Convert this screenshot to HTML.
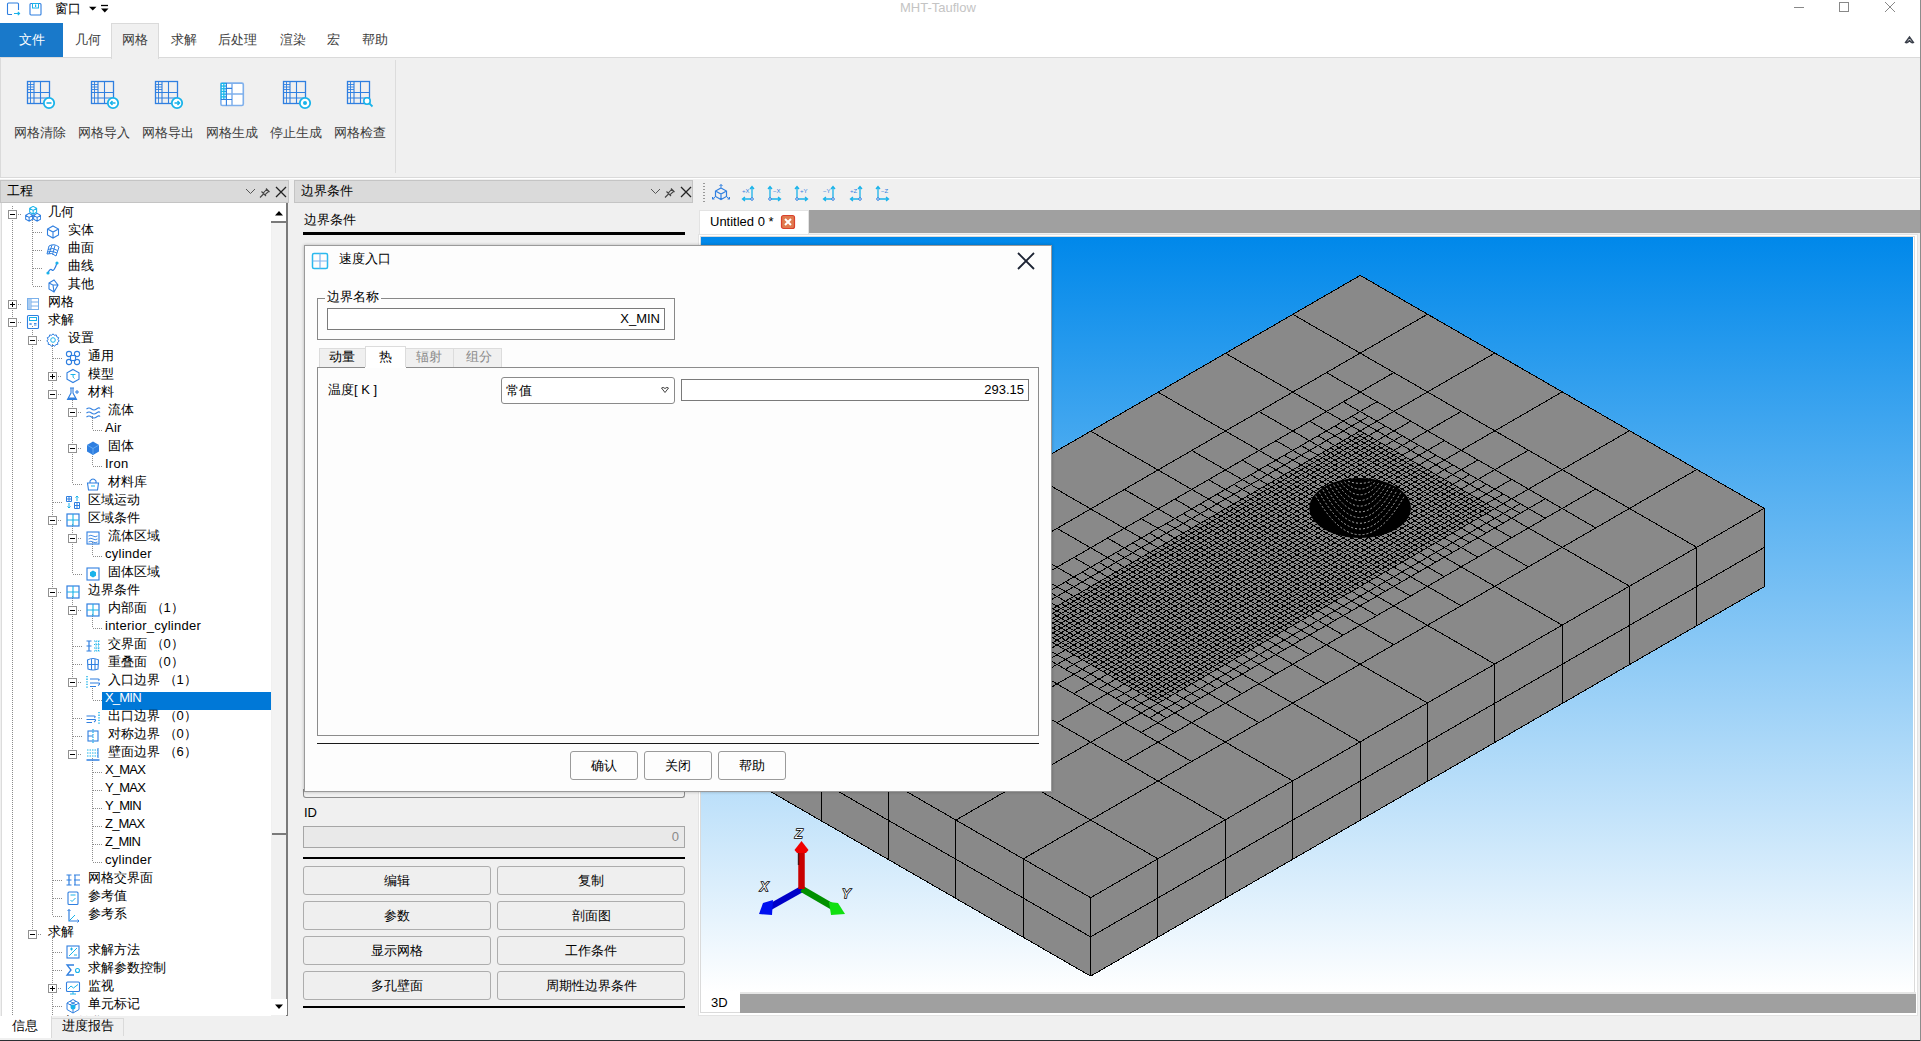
<!DOCTYPE html><html><head><meta charset="utf-8"><style>
*{box-sizing:border-box;margin:0;padding:0}
html,body{width:1921px;height:1041px;overflow:hidden;background:#f0f0f0;font-family:"Liberation Sans",sans-serif;font-size:13px;color:#000}
.a{position:absolute}
.tt{position:absolute;height:18px;line-height:18px;white-space:nowrap;font-size:13px}
.ico{position:absolute;width:16px;height:16px}
.ico svg{display:block}
.exp{position:absolute;width:9px;height:9px;border:1px solid #919191;background:#fff}
.exp i{position:absolute;left:1px;top:3px;width:5px;height:1px;background:#000}
.exp b{position:absolute;left:3px;top:1px;width:1px;height:5px;background:#000}
.btn{position:absolute;border:1px solid #adadad;border-radius:3px;background:#efefef;text-align:center;font-size:13px;color:#000}
.rt{position:absolute;top:23px;height:34px;line-height:34px;font-size:13px;color:#3c3c3c;white-space:nowrap}
.rb{position:absolute;top:124px;height:18px;line-height:18px;font-size:13px;color:#3c3c3c;white-space:nowrap}
</style></head><body>
<div class="a" style="left:0;top:0;width:1921px;height:57px;background:#fff"></div>
<svg class="a" style="left:0;top:0" width="24" height="18" viewBox="0 0 24 18"><path d="M12 14.5H8.5Q7.5 14.5 7.5 13.5V4Q7.5 3 8.5 3H17.5Q18.5 3 18.5 4V10" fill="none" stroke="#2f7fe0" stroke-width="1.1"/><path d="M14 13.5H19.5 M17.8 11.8L19.5 13.5L17.8 15.2" fill="none" stroke="#19b3ea" stroke-width="1.2"/></svg>
<svg class="a" style="left:29px;top:2px" width="14" height="14" viewBox="0 0 14 14"><rect x="1" y="1.5" width="11" height="11.5" rx="1" fill="none" stroke="#2f7fe0" stroke-width="1.1"/><rect x="3.5" y="1.5" width="6" height="4.5" fill="none" stroke="#19b3ea" stroke-width="1"/><rect x="6" y="2.5" width="1.2" height="2.5" fill="#19b3ea"/></svg>
<div class="a" style="left:55px;top:1px;height:16px;line-height:16px;font-size:13px;color:#000">窗口</div>
<svg class="a" style="left:0;top:0" width="120" height="18" viewBox="0 0 120 18"><path d="M89 6.8H96.5L92.75 10.5Z" fill="#000"/><path d="M101 5.5H108" stroke="#000" stroke-width="1.3"/><path d="M101 8.5H108.5L104.75 12.5Z" fill="#000"/></svg>
<div class="a" style="left:900px;top:0px;height:16px;line-height:16px;font-size:13px;color:#c4c4c4">MHT-Tauflow</div>
<div class="a" style="left:1794px;top:7px;width:10px;height:1px;background:#888"></div>
<div class="a" style="left:1839px;top:2px;width:10px;height:10px;border:1px solid #888"></div>
<svg class="a" style="left:1884px;top:1px" width="12" height="12" viewBox="0 0 12 12"><path d="M1 1L11 11M11 1L1 11" stroke="#888" stroke-width="1"/></svg>
<svg class="a" style="left:1904px;top:35px" width="11" height="9" viewBox="0 0 11 9"><path d="M1.5 7.5L5.5 2L9.5 7.5Q8 8.5 5.5 5.5Q3 8.5 1.5 7.5Z" fill="none" stroke="#3a3f4a" stroke-width="1.4"/></svg>
<div class="a" style="left:0;top:23px;width:63px;height:34px;background:#1979ca;color:#fff;text-align:center;line-height:34px;font-size:13px">文件</div>
<div class="a" style="left:111px;top:23px;width:48px;height:35px;background:#f0f0f0;border:1px solid #dadada;border-bottom:none"></div>
<div class="rt" style="left:75px">几何</div>
<div class="rt" style="left:122px">网格</div>
<div class="rt" style="left:171px">求解</div>
<div class="rt" style="left:218px">后处理</div>
<div class="rt" style="left:280px">渲染</div>
<div class="rt" style="left:327px">宏</div>
<div class="rt" style="left:362px">帮助</div>
<div class="a" style="left:0;top:57px;width:1921px;height:121px;background:#f0f0f0;border-top:1px solid #dadada;border-bottom:1px solid #dadada;border-left:1px solid #dadada"></div>
<div class="a" style="left:111px;top:57px;width:48px;height:2px;background:#f0f0f0;border-left:1px solid #dadada;border-right:1px solid #dadada"></div>
<div class="a" style="left:395px;top:60px;width:1px;height:113px;background:#dcdcdc"></div>
<div class="a" style="left:0;top:178px;width:1921px;height:1px;background:#fff"></div>
<div class="a" style="left:26px;top:80px"><svg width="30" height="30" viewBox="0 0 30 30"><rect x="1.5" y="1.5" width="22" height="22" fill="none" stroke="#2f7fe0" stroke-width="1.3"/><path d="M1.5 12.5H24 M1.5 18H24 M8 1.5V24 M14.5 1.5V24" stroke="#2f7fe0" stroke-width="1.1"/><path d="M4.5 1.5V24 M1.5 4.5H8 M1.5 7H8 M1.5 9.5H8" stroke="#2f7fe0" stroke-width="0.9"/><circle cx="23" cy="23" r="5.2" fill="#fff" stroke="#19b3ea" stroke-width="1.8"/><path d="M20.5 23H25.5" stroke="#19b3ea" stroke-width="1.6"/></svg></div>
<div class="rb" style="left:14px">网格清除</div>
<div class="a" style="left:90px;top:80px"><svg width="30" height="30" viewBox="0 0 30 30"><rect x="1.5" y="1.5" width="22" height="22" fill="none" stroke="#2f7fe0" stroke-width="1.3"/><path d="M1.5 12.5H24 M1.5 18H24 M8 1.5V24 M14.5 1.5V24" stroke="#2f7fe0" stroke-width="1.1"/><path d="M4.5 1.5V24 M1.5 4.5H8 M1.5 7H8 M1.5 9.5H8" stroke="#2f7fe0" stroke-width="0.9"/><circle cx="23" cy="23" r="5.2" fill="#fff" stroke="#19b3ea" stroke-width="1.8"/><path d="M25.5 23H20.5M22.5 21L20.5 23L22.5 25" fill="none" stroke="#19b3ea" stroke-width="1.5"/></svg></div>
<div class="rb" style="left:78px">网格导入</div>
<div class="a" style="left:154px;top:80px"><svg width="30" height="30" viewBox="0 0 30 30"><rect x="1.5" y="1.5" width="22" height="22" fill="none" stroke="#2f7fe0" stroke-width="1.3"/><path d="M1.5 12.5H24 M1.5 18H24 M8 1.5V24 M14.5 1.5V24" stroke="#2f7fe0" stroke-width="1.1"/><path d="M4.5 1.5V24 M1.5 4.5H8 M1.5 7H8 M1.5 9.5H8" stroke="#2f7fe0" stroke-width="0.9"/><circle cx="23" cy="23" r="5.2" fill="#fff" stroke="#19b3ea" stroke-width="1.8"/><path d="M20.5 23H25.5M23.5 21L25.5 23L23.5 25" fill="none" stroke="#19b3ea" stroke-width="1.5"/></svg></div>
<div class="rb" style="left:142px">网格导出</div>
<div class="a" style="left:218px;top:80px"><svg width="30" height="30" viewBox="0 0 30 30"><g transform="translate(2.1,2.3)"><rect x="0.8" y="0.8" width="22.4" height="22.4" rx="1.5" fill="#fff" stroke="#7fb0ec" stroke-width="1.6"/><rect x="0.5" y="0.5" width="6" height="16.8" fill="#19b6ea"/><rect x="1.7" y="1.7" width="1.4" height="1.4" fill="#fff"/><rect x="4.4" y="1.7" width="1.4" height="1.4" fill="#fff"/><rect x="1.7" y="4.4" width="1.4" height="1.4" fill="#fff"/><rect x="4.4" y="4.4" width="1.4" height="1.4" fill="#fff"/><rect x="1.7" y="7.1" width="1.4" height="1.4" fill="#fff"/><rect x="4.4" y="7.1" width="1.4" height="1.4" fill="#fff"/><rect x="1.7" y="9.8" width="1.4" height="1.4" fill="#fff"/><rect x="4.4" y="9.8" width="1.4" height="1.4" fill="#fff"/><rect x="1.7" y="12.5" width="1.4" height="1.4" fill="#fff"/><rect x="4.4" y="12.5" width="1.4" height="1.4" fill="#fff"/><rect x="1.7" y="15.2" width="1.4" height="1.4" fill="#fff"/><rect x="4.4" y="15.2" width="1.4" height="1.4" fill="#fff"/><path d="M11.9 0.8V23.2 M6.3 11.8H23.2" stroke="#7fb0ec" stroke-width="1.5"/><path d="M6.3 0.8V23.2 M6.3 6.1H11.9 M6.3 17.2H11.9 M0.8 17.2H6.3" stroke="#2f7fe0" stroke-width="1.1"/></g></svg></div>
<div class="rb" style="left:206px">网格生成</div>
<div class="a" style="left:282px;top:80px"><svg width="30" height="30" viewBox="0 0 30 30"><rect x="1.5" y="1.5" width="22" height="22" fill="none" stroke="#2f7fe0" stroke-width="1.3"/><path d="M1.5 12.5H24 M1.5 18H24 M8 1.5V24 M14.5 1.5V24" stroke="#2f7fe0" stroke-width="1.1"/><path d="M4.5 1.5V24 M1.5 4.5H8 M1.5 7H8 M1.5 9.5H8" stroke="#2f7fe0" stroke-width="0.9"/><circle cx="23" cy="23" r="5.2" fill="#fff" stroke="#19b3ea" stroke-width="1.8"/><circle cx="23" cy="23" r="2" fill="#19b3ea"/></svg></div>
<div class="rb" style="left:270px">停止生成</div>
<div class="a" style="left:346px;top:80px"><svg width="30" height="30" viewBox="0 0 30 30"><rect x="1.5" y="1.5" width="22" height="22" fill="none" stroke="#2f7fe0" stroke-width="1.3"/><path d="M1.5 12.5H24 M1.5 18H24 M8 1.5V24 M14.5 1.5V24" stroke="#2f7fe0" stroke-width="1.1"/><path d="M4.5 1.5V24 M1.5 4.5H8 M1.5 7H8 M1.5 9.5H8" stroke="#2f7fe0" stroke-width="0.9"/><circle cx="21" cy="21" r="3.2" fill="#fff" stroke="#19b3ea" stroke-width="1.6"/><path d="M23.3 23.3L26.5 26.5" stroke="#19b3ea" stroke-width="1.8"/></svg></div>
<div class="rb" style="left:334px">网格检查</div>
<div class="a" style="left:0;top:180px;width:289px;height:23px;background:#dadada;border:1px solid #c4c4c4"></div>
<div class="a" style="left:7px;top:182px;height:18px;line-height:18px;font-size:13px">工程</div>
<svg class="a" style="left:245px;top:185px" width="44" height="14" viewBox="0 0 44 14"><path d="M1 4L5.5 8.5L10 4" fill="none" stroke="#555" stroke-width="1"/><path d="M15 12.5L18.5 9 M16.5 6.5L21 11 M18.2 8.2L21.5 4.5 M19.8 9.8L23.5 6.5 M21 3.5L24.5 7" fill="none" stroke="#444" stroke-width="1.1"/><path d="M31 2L41 12M41 2L31 12" stroke="#222" stroke-width="1.3"/></svg>
<div class="a" style="left:1px;top:203px;width:287px;height:813px;background:#fff;border-left:1px solid #dcdcdc"></div>
<div style="position:absolute;left:0;top:0;width:271px;height:1016px;overflow:hidden;clip-path:inset(203px 0 0 0)"><svg class="tl" width="270" height="812" viewBox="0 205 270 812" style="position:absolute;left:0;top:205px"><path d="M12.5 214.0V304.0M32.5 232.0V250.0M32.5 250.0V268.0M32.5 268.0V286.0M12.5 304.0V322.0M32.5 340.0V934.0M52.5 358.0V376.0M52.5 376.0V394.0M52.5 394.0V502.0M72.5 412.0V448.0M72.5 448.0V484.0M52.5 502.0V520.0M52.5 520.0V592.0M72.5 538.0V574.0M52.5 592.0V880.0M72.5 610.0V646.0M72.5 646.0V664.0M72.5 664.0V682.0M72.5 682.0V718.0M72.5 718.0V736.0M72.5 736.0V754.0M92.5 772.0V790.0M92.5 790.0V808.0M92.5 808.0V826.0M92.5 826.0V844.0M92.5 844.0V862.0M52.5 880.0V898.0M52.5 898.0V916.0M52.5 952.0V970.0M52.5 970.0V988.0M52.5 988.0V1006.0M52.5 1006.0V1024.0M12.5 322.0V1016M52.5 1006.0V1016M12.5 206V214M17.5 214.5H21.5M32.5 232.5H41.5M32.5 250.5H41.5M32.5 268.5H41.5M32.5 286.5H41.5M17.5 304.5H21.5M17.5 322.5H21.5M37.5 340.5H41.5M52.5 358.5H61.5M57.5 376.5H61.5M57.5 394.5H61.5M77.5 412.5H81.5M92.5 430.5H101.5M77.5 448.5H81.5M92.5 466.5H101.5M72.5 484.5H81.5M52.5 502.5H61.5M57.5 520.5H61.5M77.5 538.5H81.5M92.5 556.5H101.5M72.5 574.5H81.5M57.5 592.5H61.5M77.5 610.5H81.5M92.5 628.5H101.5M72.5 646.5H81.5M72.5 664.5H81.5M77.5 682.5H81.5M92.5 700.5H101.5M72.5 718.5H81.5M72.5 736.5H81.5M77.5 754.5H81.5M92.5 772.5H101.5M92.5 790.5H101.5M92.5 808.5H101.5M92.5 826.5H101.5M92.5 844.5H101.5M92.5 862.5H101.5M52.5 880.5H61.5M52.5 898.5H61.5M52.5 916.5H61.5M37.5 934.5H41.5M52.5 952.5H61.5M52.5 970.5H61.5M57.5 988.5H61.5M52.5 1006.5H61.5M52.5 1024.5H61.5" stroke="#8c8c8c" stroke-width="1" stroke-dasharray="1 1" fill="none" shape-rendering="crispEdges"/></svg>
<svg width="270" height="812" viewBox="0 205 270 812" style="position:absolute;left:0;top:205px"><path d="M32.5 218.0V232.0M32.5 326.0V340.0M52.5 344.0V358.0M72.5 398.0V412.0M92.5 416.0V430.0M92.5 452.0V466.0M72.5 524.0V538.0M92.5 542.0V556.0M72.5 596.0V610.0M92.5 614.0V628.0M92.5 686.0V700.0M92.5 758.0V772.0M52.5 938.0V952.0" stroke="#8c8c8c" stroke-width="1" stroke-dasharray="1 1" fill="none" shape-rendering="crispEdges"/></svg>
<div class="exp" style="left:8px;top:210px"><i></i></div>
<div class="ico" style="left:25px;top:206px"><svg width="16" height="16" viewBox="0 0 16 16"><g transform="translate(3.5,-0.5) scale(0.58)"><path d="M8 1.5L14 5V11.5L8 15L2 11.5V5Z M2 5L8 8.5L14 5 M8 8.5V15" fill="none" stroke="#19b3ea" stroke-width="1.8"/></g><g transform="translate(-0.5,6.5) scale(0.58)"><path d="M8 1.5L14 5V11.5L8 15L2 11.5V5Z M2 5L8 8.5L14 5 M8 8.5V15" fill="none" stroke="#2f7fe0" stroke-width="1.8"/></g><g transform="translate(7.5,6.5) scale(0.58)"><path d="M8 1.5L14 5V11.5L8 15L2 11.5V5Z M2 5L8 8.5L14 5 M8 8.5V15" fill="none" stroke="#2f7fe0" stroke-width="1.8"/></g></svg></div>
<div class="tt" style="left:48px;top:203px;color:#000">几何</div>
<div class="ico" style="left:45px;top:224px"><svg width="16" height="16" viewBox="0 0 16 16"><path d="M8 2L13.5 5V11L8 14L2.5 11V5Z M2.5 5L8 8L13.5 5 M8 8V14" fill="none" stroke="#2f7fe0" stroke-width="1.1"/></svg></div>
<div class="tt" style="left:68px;top:221px;color:#000">实体</div>
<div class="ico" style="left:45px;top:242px"><svg width="16" height="16" viewBox="0 0 16 16"><path d="M4 4Q9 1 14 5L11 14Q7 10 2 12Z M7 3L4 12 M10 3.5L7.5 12.5 M3 7.5Q8 5 12.5 8.5 M2.5 10Q7 8 12 11" fill="none" stroke="#2f7fe0" stroke-width="1"/></svg></div>
<div class="tt" style="left:68px;top:239px;color:#000">曲面</div>
<div class="ico" style="left:45px;top:260px"><svg width="16" height="16" viewBox="0 0 16 16"><path d="M3 13Q5 8 7 10T12 3" fill="none" stroke="#2f7fe0" stroke-width="1.2"/><circle cx="3" cy="13" r="1.6" fill="#19b3ea"/><circle cx="12" cy="3" r="1.6" fill="#19b3ea"/></svg></div>
<div class="tt" style="left:68px;top:257px;color:#000">曲线</div>
<div class="ico" style="left:45px;top:278px"><svg width="16" height="16" viewBox="0 0 16 16"><path d="M4 5L9 2L13 7L9 14L4 11Z M4 5L8 7L9 14 M8 7L13 7" fill="none" stroke="#2f7fe0" stroke-width="1.1"/></svg></div>
<div class="tt" style="left:68px;top:275px;color:#000">其他</div>
<div class="exp" style="left:8px;top:300px"><i></i><b></b></div>
<div class="ico" style="left:25px;top:296px"><svg width="16" height="16" viewBox="0 0 16 16"><rect x="2.5" y="2.5" width="11" height="11" fill="none" stroke="#7ab0ea" stroke-width="1"/><path d="M2.5 6H13.5 M2.5 10H13.5 M6 2.5V13.5" stroke="#7ab0ea" stroke-width="1"/><rect x="3" y="3" width="3" height="10" fill="#a9ccf2"/></svg></div>
<div class="tt" style="left:48px;top:293px;color:#000">网格</div>
<div class="exp" style="left:8px;top:318px"><i></i></div>
<div class="ico" style="left:25px;top:314px"><svg width="16" height="16" viewBox="0 0 16 16"><rect x="2.5" y="1.5" width="11" height="13" rx="1" fill="none" stroke="#2f7fe0" stroke-width="1.1"/><rect x="4.5" y="3.5" width="7" height="3" fill="none" stroke="#19b3ea" stroke-width="1"/><path d="M4.5 9L6.5 11M6.5 9L4.5 11 M9 9.5H11.5M9 11H11.5" stroke="#2f7fe0" stroke-width="0.9"/></svg></div>
<div class="tt" style="left:48px;top:311px;color:#000">求解</div>
<div class="exp" style="left:28px;top:336px"><i></i></div>
<div class="ico" style="left:45px;top:332px"><svg width="16" height="16" viewBox="0 0 16 16"><path d="M8 1.8L9.3 3.3L11.3 2.9L11.8 4.9L13.7 5.6L13 7.5L14.2 9.1L12.6 10.4L12.8 12.4L10.8 12.6L9.6 14.3L8 13.1L6.4 14.3L5.2 12.6L3.2 12.4L3.4 10.4L1.8 9.1L3 7.5L2.3 5.6L4.2 4.9L4.7 2.9L6.7 3.3Z" fill="none" stroke="#2f7fe0" stroke-width="1"/><circle cx="8" cy="8" r="2.3" fill="none" stroke="#19b3ea" stroke-width="1"/></svg></div>
<div class="tt" style="left:68px;top:329px;color:#000">设置</div>
<div class="ico" style="left:65px;top:350px"><svg width="16" height="16" viewBox="0 0 16 16"><rect x="5.5" y="5.5" width="5" height="5" fill="none" stroke="#2f7fe0" stroke-width="1.1"/><circle cx="4" cy="4" r="2.6" fill="none" stroke="#2f7fe0" stroke-width="1.1"/><circle cx="12" cy="4" r="2.6" fill="none" stroke="#2f7fe0" stroke-width="1.1"/><circle cx="4" cy="12" r="2.6" fill="none" stroke="#2f7fe0" stroke-width="1.1"/><circle cx="12" cy="12" r="2.6" fill="none" stroke="#2f7fe0" stroke-width="1.1"/></svg></div>
<div class="tt" style="left:88px;top:347px;color:#000">通用</div>
<div class="exp" style="left:48px;top:372px"><i></i><b></b></div>
<div class="ico" style="left:65px;top:368px"><svg width="16" height="16" viewBox="0 0 16 16"><path d="M8 1.5L14 4.8V11.2L8 14.5L2 11.2V4.8Z" fill="none" stroke="#2f7fe0" stroke-width="1.1"/><path d="M5.5 6.5H10.5 M8 6.5Q7.5 10 9.5 10.5" fill="none" stroke="#19b3ea" stroke-width="1"/></svg></div>
<div class="tt" style="left:88px;top:365px;color:#000">模型</div>
<div class="exp" style="left:48px;top:390px"><i></i></div>
<div class="ico" style="left:65px;top:386px"><svg width="16" height="16" viewBox="0 0 16 16"><path d="M5 2H9 M6 2V7L2.5 13.5H11.5L8 7V2" fill="none" stroke="#2f7fe0" stroke-width="1.1"/><path d="M3.5 11.5H10.5L11.5 13.5H2.5Z" fill="#2f7fe0"/><path d="M12 4V8M10 6H14" stroke="#2f7fe0" stroke-width="1"/></svg></div>
<div class="tt" style="left:88px;top:383px;color:#000">材料</div>
<div class="exp" style="left:68px;top:408px"><i></i></div>
<div class="ico" style="left:85px;top:404px"><svg width="16" height="16" viewBox="0 0 16 16"><path d="M1.5 5Q4 3 6.5 5T11.5 5T15 4.5 M1.5 9Q4 7 6.5 9T11.5 9T15 8.5 M1.5 13Q4 11 6.5 13T11.5 13T15 12.5" fill="none" stroke="#2f7fe0" stroke-width="1.1"/></svg></div>
<div class="tt" style="left:108px;top:401px;color:#000">流体</div>
<div class="tt" style="left:105px;top:419px;color:#000;letter-spacing:0.25px">Air</div>
<div class="exp" style="left:68px;top:444px"><i></i></div>
<div class="ico" style="left:85px;top:440px"><svg width="16" height="16" viewBox="0 0 16 16"><path d="M8 1.5L14 5V11.5L8 15L2 11.5V5Z" fill="#2f7fe0"/><path d="M2 5L8 8.5L14 5 M8 8.5V15" stroke="#6fb2f5" stroke-width="0.8" fill="none"/></svg></div>
<div class="tt" style="left:108px;top:437px;color:#000">固体</div>
<div class="tt" style="left:105px;top:455px;color:#000;letter-spacing:0.25px">Iron</div>
<div class="ico" style="left:85px;top:476px"><svg width="16" height="16" viewBox="0 0 16 16"><path d="M2.5 7H13.5L12.5 14H3.5Z M5 7V5Q8 1 11 5V7" fill="none" stroke="#2f7fe0" stroke-width="1.1"/><path d="M6 10H10" stroke="#19b3ea" stroke-width="1"/></svg></div>
<div class="tt" style="left:108px;top:473px;color:#000">材料库</div>
<div class="ico" style="left:65px;top:494px"><svg width="16" height="16" viewBox="0 0 16 16"><path d="M1.5 2.5H6.5V7.5H1.5Z M9.5 8.5H14.5V14.5H9.5Z M1.5 5H6.5 M4 2.5V7.5 M9.5 11.5H14.5 M12 8.5V14.5" fill="none" stroke="#2f7fe0" stroke-width="1"/><path d="M4 9V14 M2.5 12.5L4 14L5.5 12.5 M12 2V7 M10.5 3.5L12 2L13.5 3.5" fill="none" stroke="#19b3ea" stroke-width="1"/></svg></div>
<div class="tt" style="left:88px;top:491px;color:#000">区域运动</div>
<div class="exp" style="left:48px;top:516px"><i></i></div>
<div class="ico" style="left:65px;top:512px"><svg width="16" height="16" viewBox="0 0 16 16"><rect x="2" y="2" width="12" height="12" fill="none" stroke="#2f7fe0" stroke-width="1.2"/><path d="M8 2V14M2 8H14" stroke="#19b3ea" stroke-width="1.1"/></svg></div>
<div class="tt" style="left:88px;top:509px;color:#000">区域条件</div>
<div class="exp" style="left:68px;top:534px"><i></i></div>
<div class="ico" style="left:85px;top:530px"><svg width="16" height="16" viewBox="0 0 16 16"><rect x="2" y="2" width="12" height="12" fill="none" stroke="#2f7fe0" stroke-width="1.1"/><path d="M3.5 6Q6 4.5 8 6T12.5 6 M3.5 9Q6 7.5 8 9T12.5 9 M3.5 12Q6 10.5 8 12T12.5 12" fill="none" stroke="#2f7fe0" stroke-width="0.9"/></svg></div>
<div class="tt" style="left:108px;top:527px;color:#000">流体区域</div>
<div class="tt" style="left:105px;top:545px;color:#000;letter-spacing:0.25px">cylinder</div>
<div class="ico" style="left:85px;top:566px"><svg width="16" height="16" viewBox="0 0 16 16"><rect x="2" y="2" width="12" height="12" fill="none" stroke="#2f7fe0" stroke-width="1.1"/><path d="M8 4.5L11 6.2V9.8L8 11.5L5 9.8V6.2Z" fill="#19b3ea"/></svg></div>
<div class="tt" style="left:108px;top:563px;color:#000">固体区域</div>
<div class="exp" style="left:48px;top:588px"><i></i></div>
<div class="ico" style="left:65px;top:584px"><svg width="16" height="16" viewBox="0 0 16 16"><rect x="2" y="2" width="12" height="12" fill="none" stroke="#2f7fe0" stroke-width="1.2"/><path d="M8 2V14M2 8H14" stroke="#19b3ea" stroke-width="1.1"/></svg></div>
<div class="tt" style="left:88px;top:581px;color:#000">边界条件</div>
<div class="exp" style="left:68px;top:606px"><i></i></div>
<div class="ico" style="left:85px;top:602px"><svg width="16" height="16" viewBox="0 0 16 16"><rect x="2" y="2" width="12" height="12" fill="none" stroke="#2f7fe0" stroke-width="1.2"/><path d="M8 2V14M2 8H14" stroke="#19b3ea" stroke-width="1.1"/></svg></div>
<div class="tt" style="left:108px;top:599px;color:#000">内部面 （1）</div>
<div class="tt" style="left:105px;top:617px;color:#000;letter-spacing:0.25px">interior_cylinder</div>
<div class="ico" style="left:85px;top:638px"><svg width="16" height="16" viewBox="0 0 16 16"><path d="M1.5 3H6.5 M1.5 13H6.5 M4 3V13 M1.5 8H6.5" stroke="#2f7fe0" stroke-width="1.2" fill="none"/><path d="M9 3H15 M9 6.5H15 M9 10H15 M9 13H15 M11 3V13 M13.5 3V13" stroke="#19b3ea" stroke-width="1" stroke-dasharray="1.2 1" fill="none"/></svg></div>
<div class="tt" style="left:108px;top:635px;color:#000">交界面 （0）</div>
<div class="ico" style="left:85px;top:656px"><svg width="16" height="16" viewBox="0 0 16 16"><path d="M2.5 4Q8 1 13.5 4L13 13Q8 15 3 13Z M2.5 8.5H13.5 M6.5 2.5V14 M10 2.5V14" fill="none" stroke="#2f7fe0" stroke-width="1.1"/></svg></div>
<div class="tt" style="left:108px;top:653px;color:#000">重叠面 （0）</div>
<div class="exp" style="left:68px;top:678px"><i></i></div>
<div class="ico" style="left:85px;top:674px"><svg width="16" height="16" viewBox="0 0 16 16"><path d="M2 2V14" stroke="#19b3ea" stroke-width="1.4" stroke-dasharray="1.3 1.3"/><path d="M5 5H13Q15 5 13.5 7 M5 9H14Q15.5 10 13 11.5 M5 12.5H11" fill="none" stroke="#2f7fe0" stroke-width="1.1"/></svg></div>
<div class="tt" style="left:108px;top:671px;color:#000">入口边界 （1）</div>
<div style="position:absolute;left:102px;top:692px;width:169px;height:18px;background:#0078d7"></div>
<div class="tt" style="left:105px;top:689px;color:#fff;letter-spacing:-0.8px">X_MIN</div>
<div class="ico" style="left:85px;top:710px"><svg width="16" height="16" viewBox="0 0 16 16"><path d="M14 2V14" stroke="#19b3ea" stroke-width="1.4" stroke-dasharray="1.3 1.3"/><path d="M1.5 6H9Q11 6 9.5 8 M1.5 9.5H10Q11.5 10.5 9 12 M1.5 12.5H7" fill="none" stroke="#2f7fe0" stroke-width="1.1"/></svg></div>
<div class="tt" style="left:108px;top:707px;color:#000">出口边界 （0）</div>
<div class="ico" style="left:85px;top:728px"><svg width="16" height="16" viewBox="0 0 16 16"><rect x="3" y="3" width="10" height="10" fill="none" stroke="#2f7fe0" stroke-width="1.1"/><path d="M8 1V15" stroke="#19b3ea" stroke-width="1.2" stroke-dasharray="1.5 1"/><path d="M3 8H8" stroke="#2f7fe0" stroke-width="1"/></svg></div>
<div class="tt" style="left:108px;top:725px;color:#000">对称边界 （0）</div>
<div class="exp" style="left:68px;top:750px"><i></i></div>
<div class="ico" style="left:85px;top:746px"><svg width="16" height="16" viewBox="0 0 16 16"><path d="M1.5 14H14.5" stroke="#2f7fe0" stroke-width="1.5"/><path d="M2 4H13 M2 7H13 M2 10H13" stroke="#19b3ea" stroke-width="1" stroke-dasharray="1.5 1"/><path d="M13 2V12" stroke="#2f7fe0" stroke-width="1"/></svg></div>
<div class="tt" style="left:108px;top:743px;color:#000">壁面边界 （6）</div>
<div class="tt" style="left:105px;top:761px;color:#000;letter-spacing:-0.8px">X_MAX</div>
<div class="tt" style="left:105px;top:779px;color:#000;letter-spacing:-0.8px">Y_MAX</div>
<div class="tt" style="left:105px;top:797px;color:#000;letter-spacing:-0.8px">Y_MIN</div>
<div class="tt" style="left:105px;top:815px;color:#000;letter-spacing:-0.8px">Z_MAX</div>
<div class="tt" style="left:105px;top:833px;color:#000;letter-spacing:-0.8px">Z_MIN</div>
<div class="tt" style="left:105px;top:851px;color:#000;letter-spacing:0.25px">cylinder</div>
<div class="ico" style="left:65px;top:872px"><svg width="16" height="16" viewBox="0 0 16 16"><path d="M1.5 3H6.5 M1.5 13H6.5 M4 3V13 M1.5 8H6.5" stroke="#2f7fe0" stroke-width="1.2" fill="none"/><path d="M9 3H15 M9 8H15 M9 13H15 M10 3V13" stroke="#2f7fe0" stroke-width="1.1" fill="none"/></svg></div>
<div class="tt" style="left:88px;top:869px;color:#000">网格交界面</div>
<div class="ico" style="left:65px;top:890px"><svg width="16" height="16" viewBox="0 0 16 16"><rect x="3" y="2" width="10" height="12.5" rx="1" fill="none" stroke="#2f7fe0" stroke-width="1.1"/><path d="M5.5 5H10.5 M5.5 10L7 11.5L10.5 8" fill="none" stroke="#19b3ea" stroke-width="1"/></svg></div>
<div class="tt" style="left:88px;top:887px;color:#000">参考值</div>
<div class="ico" style="left:65px;top:908px"><svg width="16" height="16" viewBox="0 0 16 16"><path d="M4 1.5V13H14" fill="none" stroke="#2f7fe0" stroke-width="1.2"/><path d="M4 13L10 7" stroke="#19b3ea" stroke-width="1"/><path d="M2.5 3L4 1.5L5.5 3 M12.5 11.5L14 13L12.5 14.5" fill="none" stroke="#2f7fe0" stroke-width="1"/></svg></div>
<div class="tt" style="left:88px;top:905px;color:#000">参考系</div>
<div class="exp" style="left:28px;top:930px"><i></i></div>
<div class="tt" style="left:48px;top:923px;color:#000">求解</div>
<div class="ico" style="left:65px;top:944px"><svg width="16" height="16" viewBox="0 0 16 16"><rect x="2" y="2" width="12" height="12" fill="none" stroke="#2f7fe0" stroke-width="1.1"/><path d="M4 12L12 4 M5 5H8 M6.5 3.5V6.5 M9 11H12" stroke="#19b3ea" stroke-width="1"/></svg></div>
<div class="tt" style="left:88px;top:941px;color:#000">求解方法</div>
<div class="ico" style="left:65px;top:962px"><svg width="16" height="16" viewBox="0 0 16 16"><path d="M9 3H2L6 8L2 13H9" fill="none" stroke="#2f7fe0" stroke-width="1.3"/><circle cx="12.5" cy="8.5" r="2" fill="none" stroke="#19b3ea" stroke-width="1.1"/></svg></div>
<div class="tt" style="left:88px;top:959px;color:#000">求解参数控制</div>
<div class="exp" style="left:48px;top:984px"><i></i><b></b></div>
<div class="ico" style="left:65px;top:980px"><svg width="16" height="16" viewBox="0 0 16 16"><rect x="1.5" y="2" width="13" height="9.5" rx="1" fill="none" stroke="#2f7fe0" stroke-width="1.1"/><path d="M3 9L6 6L8.5 8L13 4.5 M5 14H11 M8 11.5V14" fill="none" stroke="#19b3ea" stroke-width="1"/></svg></div>
<div class="tt" style="left:88px;top:977px;color:#000">监视</div>
<div class="ico" style="left:65px;top:998px"><svg width="16" height="16" viewBox="0 0 16 16"><path d="M8 1.5L14 5V11.5L8 15L2 11.5V5Z M2 5L8 8.5L14 5 M8 8.5V15 M5 3.3L11 6.8 M11 3.3L5 6.8" fill="none" stroke="#2f7fe0" stroke-width="1"/><circle cx="8" cy="9" r="2.5" fill="#19b3ea"/></svg></div>
<div class="tt" style="left:88px;top:995px;color:#000">单元标记</div>
<div class="tt" style="left:65px;top:1013px;color:#000">初始化</div></div>
<div class="a" style="left:271px;top:205px;width:17px;height:811px;background:#f0f0f0"></div>
<div class="a" style="left:271px;top:205px;width:16px;height:16px;background:#fff"></div>
<svg class="a" style="left:273px;top:209px" width="12" height="8" viewBox="0 0 12 8"><path d="M2 6.5L6 2L10 6.5Z" fill="#000"/></svg>
<div class="a" style="left:271px;top:221px;width:16px;height:2px;background:#7a7a7a"></div>
<div class="a" style="left:272px;top:223px;width:15px;height:612px;background:#f3f3f3;border-bottom:2px solid #7a7a7a"></div>
<div class="a" style="left:286px;top:203px;width:2px;height:813px;background:#7a7a7a"></div>
<div class="a" style="left:271px;top:999px;width:16px;height:16px;background:#fff"></div>
<svg class="a" style="left:273px;top:1003px" width="12" height="8" viewBox="0 0 12 8"><path d="M2 1.5L6 6L10 1.5Z" fill="#000"/></svg>
<div class="a" style="left:0;top:1016px;width:52px;height:22px;background:#fff;border-right:1px solid #dadada"></div>
<div class="a" style="left:12px;top:1017px;height:18px;line-height:18px;font-size:13px">信息</div>
<div class="a" style="left:52px;top:1018px;width:72px;height:18px;background:#f0f0f0;border:1px solid #dadada;border-left:none;border-bottom:none"></div>
<div class="a" style="left:62px;top:1017px;height:18px;line-height:18px;font-size:13px">进度报告</div>
<div class="a" style="left:0;top:1040px;width:1921px;height:1px;background:#2b2f33"></div>
<div class="a" style="left:1920px;top:0;width:1px;height:1041px;background:#8c8c8c"></div>
<div class="a" style="left:294px;top:180px;width:399px;height:23px;background:#dadada;border:1px solid #c4c4c4"></div>
<div class="a" style="left:301px;top:182px;height:18px;line-height:18px;font-size:13px">边界条件</div>
<svg class="a" style="left:650px;top:185px" width="44" height="14" viewBox="0 0 44 14"><path d="M1 4L5.5 8.5L10 4" fill="none" stroke="#555" stroke-width="1"/><path d="M15 12.5L18.5 9 M16.5 6.5L21 11 M18.2 8.2L21.5 4.5 M19.8 9.8L23.5 6.5 M21 3.5L24.5 7" fill="none" stroke="#444" stroke-width="1.1"/><path d="M31 2L41 12M41 2L31 12" stroke="#222" stroke-width="1.3"/></svg>
<div class="a" style="left:304px;top:211px;height:18px;line-height:18px;font-size:13px">边界条件</div>
<div class="a" style="left:303px;top:232px;width:382px;height:3px;background:#000"></div>
<div class="a" style="left:303px;top:789px;width:382px;height:9px;border:1px solid #8c8c8c;border-top:none;border-radius:0 0 3px 3px"></div>
<div class="a" style="left:304px;top:804px;height:18px;line-height:18px;font-size:13px">ID</div>
<div class="a" style="left:303px;top:826px;width:382px;height:22px;background:#e9e9e9;border:1px solid #a6a6a6;color:#8a8a8a;text-align:right;padding-right:5px;line-height:20px;font-size:13px">0</div>
<div class="a" style="left:303px;top:857px;width:382px;height:2px;background:#000"></div>
<div class="btn" style="left:303px;top:866px;width:188px;height:29px;line-height:27px">编辑</div>
<div class="btn" style="left:497px;top:866px;width:188px;height:29px;line-height:27px">复制</div>
<div class="btn" style="left:303px;top:901px;width:188px;height:29px;line-height:27px">参数</div>
<div class="btn" style="left:497px;top:901px;width:188px;height:29px;line-height:27px">剖面图</div>
<div class="btn" style="left:303px;top:936px;width:188px;height:29px;line-height:27px">显示网格</div>
<div class="btn" style="left:497px;top:936px;width:188px;height:29px;line-height:27px">工作条件</div>
<div class="btn" style="left:303px;top:971px;width:188px;height:29px;line-height:27px">多孔壁面</div>
<div class="btn" style="left:497px;top:971px;width:188px;height:29px;line-height:27px">周期性边界条件</div>
<div class="a" style="left:303px;top:1006px;width:382px;height:2px;background:#000"></div>
<div class="a" style="left:703px;top:183px;width:2px;height:21px;background:repeating-linear-gradient(#999 0 1px,transparent 1px 3px)"></div>
<svg class="a" style="left:711px;top:183px" width="20" height="19" viewBox="0 0 20 19"><path d="M10 5L15.5 8V13.5L10 16.5L4.5 13.5V8Z M4.5 8L10 11L15.5 8 M10 11V16.5" fill="none" stroke="#2f7fe0" stroke-width="1.2"/><path d="M10 4.5V1.5 M8.5 3L10 1.5L11.5 3 M4 14L1.5 16 M1.5 14V16H3.5 M16 14L18.5 16 M18.5 14V16H16.5" fill="none" stroke="#2f7fe0" stroke-width="1"/></svg>
<div class="a" style="left:740px;top:184px"><svg width="17" height="19" viewBox="0 0 17 19"><path d="M12 15V3 M10 5L12 2.5L14 5 M3 15H12 M5 13L2.5 15L5 17" fill="none" stroke="#19b3ea" stroke-width="1.3"/><circle cx="12" cy="15" r="1.3" fill="#fff" stroke="#2f7fe0" stroke-width="1"/><text x="2" y="8.5" font-size="6" fill="#2f7fe0" font-family="Liberation Sans">+X</text></svg></div>
<div class="a" style="left:767px;top:184px"><svg width="17" height="19" viewBox="0 0 17 19"><path d="M3 15V3 M1 5L3 2.5L5 5 M3 15H13 M11 13L13.5 15L11 17" fill="none" stroke="#19b3ea" stroke-width="1.3"/><circle cx="3" cy="15" r="1.3" fill="#fff" stroke="#2f7fe0" stroke-width="1"/><text x="6" y="8.5" font-size="6" fill="#2f7fe0" font-family="Liberation Sans">−X</text></svg></div>
<div class="a" style="left:794px;top:184px"><svg width="17" height="19" viewBox="0 0 17 19"><path d="M3 15V3 M1 5L3 2.5L5 5 M3 15H13 M11 13L13.5 15L11 17" fill="none" stroke="#19b3ea" stroke-width="1.3"/><circle cx="3" cy="15" r="1.3" fill="#fff" stroke="#2f7fe0" stroke-width="1"/><text x="6" y="8.5" font-size="6" fill="#2f7fe0" font-family="Liberation Sans">+Y</text></svg></div>
<div class="a" style="left:821px;top:184px"><svg width="17" height="19" viewBox="0 0 17 19"><path d="M12 15V3 M10 5L12 2.5L14 5 M3 15H12 M5 13L2.5 15L5 17" fill="none" stroke="#19b3ea" stroke-width="1.3"/><circle cx="12" cy="15" r="1.3" fill="#fff" stroke="#2f7fe0" stroke-width="1"/><text x="2" y="8.5" font-size="6" fill="#2f7fe0" font-family="Liberation Sans">−Y</text></svg></div>
<div class="a" style="left:848px;top:184px"><svg width="17" height="19" viewBox="0 0 17 19"><path d="M12 15V3 M10 5L12 2.5L14 5 M3 15H12 M5 13L2.5 15L5 17" fill="none" stroke="#19b3ea" stroke-width="1.3"/><circle cx="12" cy="15" r="1.3" fill="#fff" stroke="#2f7fe0" stroke-width="1"/><text x="2" y="8.5" font-size="6" fill="#2f7fe0" font-family="Liberation Sans">+Z</text></svg></div>
<div class="a" style="left:875px;top:184px"><svg width="17" height="19" viewBox="0 0 17 19"><path d="M3 15V3 M1 5L3 2.5L5 5 M3 15H13 M11 13L13.5 15L11 17" fill="none" stroke="#19b3ea" stroke-width="1.3"/><circle cx="3" cy="15" r="1.3" fill="#fff" stroke="#2f7fe0" stroke-width="1"/><text x="6" y="8.5" font-size="6" fill="#2f7fe0" font-family="Liberation Sans">−Z</text></svg></div>
<div class="a" style="left:699px;top:210px;width:110px;height:24px;background:#fff;border:1px solid #e3e3e3;border-bottom:none"></div>
<div class="a" style="left:809px;top:210px;width:1111px;height:23px;background:#a0a0a0"></div>
<div class="a" style="left:710px;top:213px;height:18px;line-height:18px;font-size:13px;color:#000">Untitled 0 *</div>
<svg class="a" style="left:780px;top:214px" width="16" height="16" viewBox="0 0 16 16"><rect x="1.5" y="1.5" width="13" height="13" rx="2" fill="#e07a4f" stroke="#d9412d" stroke-width="1.2"/><path d="M5 5L11 11M11 5L5 11" stroke="#fff" stroke-width="2"/></svg>
<div class="a" style="left:698px;top:234px;width:1220px;height:782px;background:#fff;border:1px solid #e3e3e3"></div>
<div class="a" style="left:700px;top:236px;width:1215px;height:777px;border:1px solid #dadada"></div>
<div class="a" style="left:701px;top:237px;width:1212px;height:755px;background:linear-gradient(#0088ea,#ffffff)"></div>
<div class="a" style="left:740px;top:992px;width:1176px;height:21px;background:#a0a0a0;border-top:2px solid #e6e6e6"></div>
<div class="a" style="left:711px;top:994px;height:18px;line-height:18px;font-size:13px">3D</div>
<svg class="a" style="left:702px;top:237px" width="1211" height="755" viewBox="702 237 1211 755"><polygon points="1360.2,275.4 1764.2,508.3 1764.2,586.7 1090.6,976.1 686.6,743.2 686.6,664.8" fill="#898989"/>
<path d="M1360.2 275.4L1764.2 508.3M1292.8 314.3L1696.8 547.3M1225.5 353.3L1629.5 586.2M1158.1 392.2L1562.1 625.1M1090.8 431.2L1494.7 664.1M1023.4 470.1L1427.4 703M956 509L1360 742M888.7 548L1292.7 780.9M821.3 586.9L1225.3 819.8M754 625.9L1157.9 858.8M686.6 664.8L1090.6 897.7M1326.5 372.6L1595.8 527.9M1343.3 401.8L1545.3 518.2M1351.7 416.3L1520.1 513.4M1259.1 411.6L1528.4 566.9M1309.6 421.2L1511.6 537.7M1334.9 426.1L1503.2 523.1M1318 435.8L1486.4 532.9M1276 440.7L1477.9 557.2M1301.2 445.6L1469.5 542.6M1284.4 455.3L1452.7 552.3M1191.8 450.5L1461.1 605.8M1242.3 460.2L1444.3 576.6M1267.5 465L1435.9 562.1M1250.7 474.8L1419 571.8M1208.6 479.7L1410.6 596.1M1233.8 484.5L1402.2 581.5M1217 494.2L1385.3 591.3M1124.4 489.4L1393.7 644.7M1174.9 499.1L1376.9 615.6M1200.2 504L1368.5 601M1183.3 513.7L1351.7 610.7M1141.2 518.6L1343.2 635.1M1166.5 523.4L1334.8 620.5M1149.6 533.2L1318 630.2M1057 528.4L1326.4 683.7M1107.6 538.1L1309.5 654.5M1132.8 542.9L1301.1 640M1116 552.6L1284.3 649.7M1073.9 557.5L1275.9 674M1099.1 562.4L1267.5 659.4M1082.3 572.1L1250.6 669.2M989.7 567.3L1259 722.6M1040.2 577L1242.2 693.5M1065.4 581.8L1233.8 678.9M1048.6 591.6L1216.9 688.6M1006.5 596.5L1208.5 712.9M1031.8 601.3L1200.1 698.4M1014.9 611L1183.3 708.1M922.3 606.3L1191.6 761.5M972.8 615.9L1174.8 732.4M998.1 620.8L1166.4 717.8M1355.9 433.4L1490.6 511M1347.5 438.2L1482.2 515.9M1339.1 443.1L1473.8 520.7M1330.7 448L1465.3 525.6M1322.3 452.8L1456.9 530.5M1313.8 457.7L1448.5 535.3M1305.4 462.6L1440.1 540.2M1297 467.4L1431.7 545.1M1288.6 472.3L1423.2 549.9M1280.2 477.2L1414.8 554.8M1271.7 482L1406.4 559.7M1263.3 486.9L1398 564.5M1254.9 491.8L1389.5 569.4M1246.5 496.6L1381.1 574.3M1238.1 501.5L1372.7 579.1M1229.6 506.4L1364.3 584M1221.2 511.2L1355.9 588.9M1212.8 516.1L1347.5 593.7M1204.4 521L1339 598.6M1196 525.8L1330.6 603.5M1187.5 530.7L1322.2 608.3M1179.1 535.6L1313.8 613.2M1170.7 540.4L1305.3 618.1M1162.3 545.3L1296.9 622.9M1153.9 550.2L1288.5 627.8M1145.4 555L1280.1 632.7M1137 559.9L1271.7 637.5M1128.6 564.8L1263.2 642.4M1120.2 569.6L1254.8 647.3M1111.8 574.5L1246.4 652.2M1103.3 579.4L1238 657M1094.9 584.2L1229.6 661.9M1086.5 589.1L1221.2 666.8M1078.1 594L1212.7 671.6M1069.7 598.8L1204.3 676.5M1061.2 603.7L1195.9 681.4M1052.8 608.6L1187.5 686.2M1044.4 613.5L1179 691.1M1036 618.3L1170.6 696M1027.6 623.2L1162.2 700.8M1360.2 275.4L686.6 664.8M1427.5 314.2L753.9 703.6M1494.9 353L821.3 742.4M1393.8 372.6L922.3 645.1M1377 401.7L972.8 635.4M1368.6 416.3L998.1 630.5M1562.2 391.9L888.6 781.3M1461.2 411.4L989.6 684M1410.7 421.2L1006.5 654.8M1385.4 426L1014.9 640.2M1402.2 435.7L1031.7 649.9M1444.3 440.6L1040.2 674.2M1419.1 445.4L1048.6 659.6M1435.9 455.2L1065.4 669.3M1364.3 433.3L1027.5 628M1372.8 438.2L1036 632.9M1381.2 443.1L1044.4 637.8M1389.6 447.9L1052.8 642.6M1398 452.8L1061.2 647.5M1406.4 457.6L1069.6 652.3M1414.8 462.5L1078 657.2M1423.3 467.3L1086.5 662M1629.5 430.7L955.9 820.1M1528.5 450.2L1057 722.8M1478 460L1073.8 693.6M1452.7 464.9L1082.2 679M1469.6 474.6L1099.1 688.7M1511.6 479.4L1107.5 713M1486.4 484.3L1115.9 698.4M1503.2 494L1132.7 708.1M1431.7 472.2L1094.9 666.9M1440.1 477L1103.3 671.7M1448.5 481.9L1111.7 676.6M1456.9 486.7L1120.1 681.4M1465.3 491.6L1128.5 686.3M1473.8 496.4L1137 691.1M1482.2 501.3L1145.4 696M1490.6 506.1L1153.8 700.8M1696.8 469.5L1023.2 858.9M1595.8 489L1124.3 761.6M1545.3 498.8L1141.2 732.4M1520.1 503.7L1149.6 717.8M1764.2 508.3L1090.6 897.7M1764.2 508.3L1764.2 586.7M1696.8 547.3L1696.8 625.7M1629.5 586.2L1629.5 664.6M1562.1 625.1L1562.1 703.5M1494.7 664.1L1494.7 742.5M1427.4 703L1427.4 781.4M1360 742L1360 820.4M1292.7 780.9L1292.7 859.3M1225.3 819.8L1225.3 898.2M1157.9 858.8L1157.9 937.2M1090.6 897.7L1090.6 976.1M1764.2 547.5L1090.6 936.9M1764.2 586.7L1090.6 976.1M686.6 664.8L686.6 743.2M753.9 703.6L753.9 782M821.3 742.4L821.3 820.8M888.6 781.3L888.6 859.7M955.9 820.1L955.9 898.5M1023.2 858.9L1023.2 937.3M686.6 704L1090.6 936.9M686.6 743.2L1090.6 976.1" stroke="#000" stroke-width="1" fill="none" shape-rendering="crispEdges"/>
<ellipse cx="1360.1" cy="508" rx="50.8" ry="30.1" fill="#000"/>
<path d="M1348.1 481.2Q1360.1 485.5 1372.1 481.2M1344.5 481.8Q1360.1 496.3 1375.7 481.8M1340.9 482.6Q1360.1 507 1379.3 482.6M1337.3 483.6Q1360.1 517.4 1382.9 483.6M1333.7 484.7Q1360.1 527.6 1386.5 484.7M1330.1 486.2Q1360.1 537.6 1390.1 486.2M1326.5 487.9Q1360.1 547.3 1393.7 487.9M1322.9 489.9Q1360.1 556.6 1397.3 489.9M1319.3 492.5Q1360.1 565.5 1400.9 492.5M1315.7 495.8Q1360.1 573.6 1404.5 495.8" stroke="#a8a8a8" stroke-width="1" fill="none" stroke-dasharray="2 2"/></svg>
<svg class="a" style="left:740px;top:820px" width="120" height="105" viewBox="740 820 120 105">
<path d="M802 889L770 907" stroke="#0000c8" stroke-width="6.5"/><path d="M759 914L763 903L773 900L772 915Z" fill="#0010f0"/>
<path d="M802 889L833 907" stroke="#009000" stroke-width="6.5"/><path d="M845 914L838 903L829 902L831 915Z" fill="#10e010"/>
<path d="M801.5 889V852" stroke="#c80000" stroke-width="6.5"/><path d="M798.5 853V865" stroke="#200000" stroke-width="1.5" opacity="0.7"/><path d="M801.5 841L808.5 850L806 853H797L794.5 850Z" fill="#f00000"/>
<g font-size="12.5" font-style="italic" fill="#fff" stroke="#000" stroke-width="1.6" paint-order="stroke" font-family="Liberation Sans">
<text x="795" y="838">Z</text><text x="760" y="891">X</text><text x="842" y="898">Y</text></g>
</svg>
<div class="a" style="left:304px;top:245px;width:748px;height:547px;background:#fdfdfd;border:1px solid #9a9a9a;box-shadow:0 0 3px rgba(0,0,0,0.25)"></div>
<svg class="a" style="left:311px;top:252px" width="18" height="18" viewBox="0 0 18 18"><rect x="1.5" y="1.5" width="15" height="15" rx="1.5" fill="none" stroke="#29b9ee" stroke-width="1.5"/><path d="M9 1.5V16.5M1.5 9H16.5" stroke="#7fb4ee" stroke-width="1.2"/></svg>
<div class="a" style="left:339px;top:250px;height:18px;line-height:18px;font-size:13px">速度入口</div>
<svg class="a" style="left:1016px;top:251px" width="20" height="20" viewBox="0 0 20 20"><path d="M2 2L18 18M18 2L2 18" stroke="#1c2333" stroke-width="1.8"/></svg>
<div class="a" style="left:317px;top:298px;width:358px;height:42px;border:1px solid #888"></div>
<div class="a" style="left:325px;top:288px;height:18px;line-height:18px;font-size:13px;background:#fdfdfd;padding:0 2px">边界名称</div>
<div class="a" style="left:327px;top:308px;width:338px;height:22px;background:#fff;border:1px solid #7a7a7a;text-align:right;padding-right:4px;line-height:20px;font-size:13px">X_MIN</div>
<div class="a" style="left:319px;top:348px;width:183px;height:20px;background:#f0f0f0;border:1px solid #dcdcdc;border-bottom:none"></div>
<div class="a" style="left:365px;top:346px;width:41px;height:23px;background:#fff;border:1px solid #dcdcdc;border-bottom:none"></div>
<div class="a" style="left:453px;top:349px;width:1px;height:19px;background:#dcdcdc"></div>
<div class="a" style="left:329px;top:348px;height:18px;line-height:18px;font-size:13px;color:#000">动量</div>
<div class="a" style="left:379px;top:348px;height:18px;line-height:18px;font-size:13px;color:#000">热</div>
<div class="a" style="left:416px;top:348px;height:18px;line-height:18px;font-size:13px;color:#8a8a8a">辐射</div>
<div class="a" style="left:466px;top:348px;height:18px;line-height:18px;font-size:13px;color:#8a8a8a">组分</div>
<div class="a" style="left:317px;top:367px;width:722px;height:369px;background:#fdfdfd;border:1px solid #8c8c8c"></div>
<div class="a" style="left:365px;top:367px;width:41px;height:1px;background:#fff"></div>
<div class="a" style="left:328px;top:381px;height:18px;line-height:18px;font-size:13px">温度[ K ]</div>
<div class="a" style="left:501px;top:377px;width:174px;height:27px;background:#fff;border:1px solid #8a8a8a;border-radius:3px;padding-left:4px;line-height:25px;font-size:13px">常值</div>
<svg class="a" style="left:660px;top:386px" width="10" height="8" viewBox="0 0 10 8"><path d="M1.5 2Q3 0.5 5 2.5Q7 0.5 8.5 2L5 6.5Z" fill="none" stroke="#444" stroke-width="1"/></svg>
<div class="a" style="left:681px;top:379px;width:348px;height:22px;background:#fff;border:1px solid #7a7a7a;text-align:right;padding-right:4px;line-height:20px;font-size:13px">293.15</div>
<div class="a" style="left:317px;top:743px;width:722px;height:1px;background:#1a1a1a"></div>
<div class="btn" style="left:570px;top:751px;width:68px;height:29px;line-height:27px;background:#fdfdfd;border-color:#9a9a9a">确认</div>
<div class="btn" style="left:644px;top:751px;width:68px;height:29px;line-height:27px;background:#fdfdfd;border-color:#9a9a9a">关闭</div>
<div class="btn" style="left:718px;top:751px;width:68px;height:29px;line-height:27px;background:#fdfdfd;border-color:#9a9a9a">帮助</div>
</body></html>
